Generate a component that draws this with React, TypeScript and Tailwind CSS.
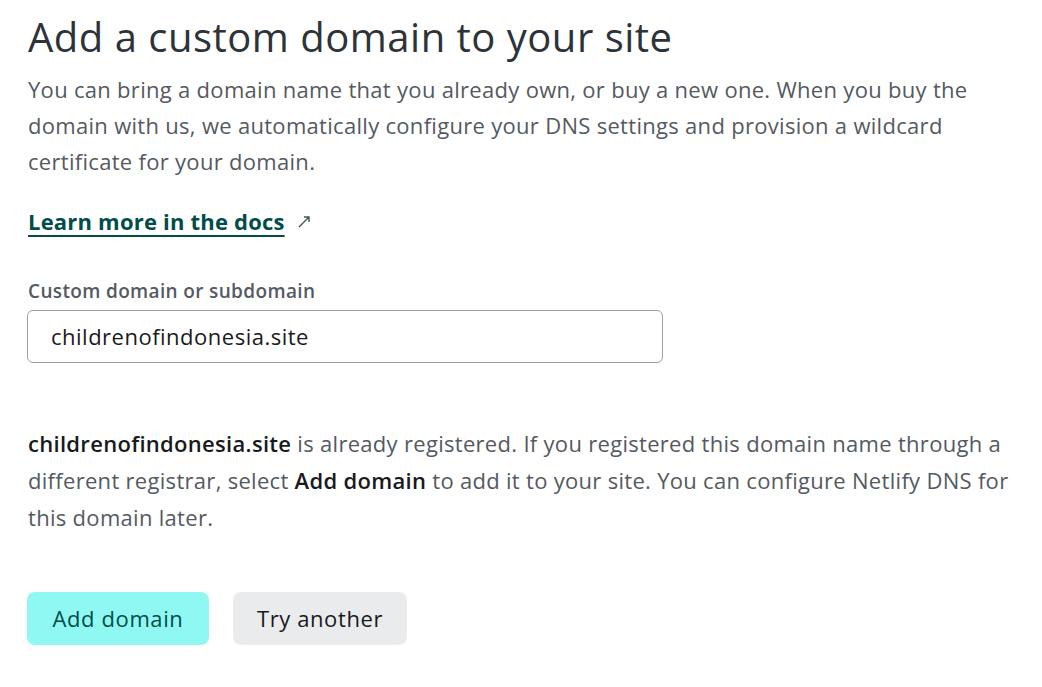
import React from "react";

function App() {
  return (
    <div className="min-h-screen bg-white pl-[28px] pr-6 pt-[9px] font-['Open_Sans',sans-serif] text-[#545a61]">
      <h1 className="text-[40px] leading-[56px] tracking-[0.5px] text-[#2d3338] font-normal">
        Add a custom domain to your site
      </h1>
      <p className="mt-[6px] max-w-[960px] text-[22px] leading-[36px] tracking-[0.3px]">
        You can bring a domain name that you already own, or buy a new one. When you buy the domain
        with us, we automatically configure your DNS settings and provision a wildcard certificate for
        your domain.
      </p>
      <div className="mt-[26px] flex items-center gap-[12px]">
        <a
          href="#"
          className="text-[22px] font-bold tracking-[0.2px] text-[#014d4a] underline underline-offset-[5px] decoration-2"
        >
          Learn more in the docs
        </a>
        <svg width="14" height="14" viewBox="0 0 14 14" fill="none" stroke="#3b5a58" strokeWidth="1.4">
          <path d="M2 12 L12 2 M7 2 H12 V7" />
        </svg>
      </div>
      <label className="mt-[39px] block text-[19px] font-semibold tracking-[0.35px] text-[#545a61]">
        Custom domain or subdomain
      </label>
      <div className="-ml-px mt-[4px] flex h-[53px] w-[636px] items-center rounded-[6px] border border-[#9aa1a8] px-[23px] text-[22px] tracking-[0.5px] text-[#181a1c]">
        childrenofindonesia.site
      </div>
      <p className="mt-[62px] max-w-[1000px] text-[22px] leading-[37px] tracking-[0.3px]">
        <span className="font-semibold text-[#181a1c]">childrenofindonesia.site</span> is already
        registered. If you registered this domain name through a different registrar, select{" "}
        <span className="font-semibold text-[#181a1c]">Add domain</span> to add it to your site. You can
        configure Netlify DNS for this domain later.
      </p>
      <div className="-ml-px mt-[56px] flex gap-[24px]">
        <button className="h-[53px] w-[182px] rounded-[8px] bg-[#8ff8f2] text-[22px] tracking-[0.6px] text-[#014d4a]">
          Add domain
        </button>
        <button className="h-[53px] w-[174px] rounded-[8px] bg-[#e9ebed] text-[22px] tracking-[0.6px] text-[#181a1c]">
          Try another
        </button>
      </div>
    </div>
  );
}

export default App;
